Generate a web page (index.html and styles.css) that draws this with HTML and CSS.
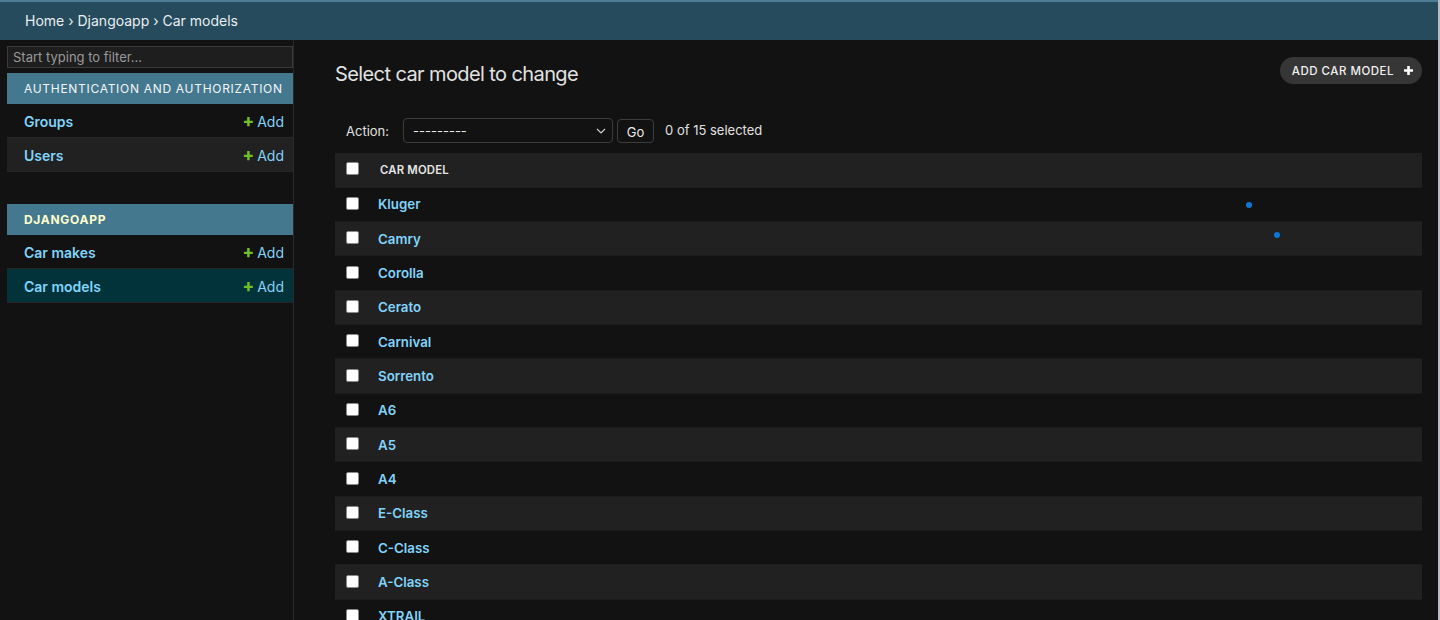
FILE: index.html
```html
<!DOCTYPE html>
<html lang="en">
<head>
<meta charset="utf-8">
<title>Select car model to change</title>
<link rel="stylesheet" href="styles.css">
</head>
<body>
<div class="page">
  <div class="breadcrumbs">
    <a href="#">Home</a> › <a href="#">Djangoapp</a> › Car models
  </div>
  <div class="main">
    <nav class="sidebar">
      <input class="nav-filter" type="text" placeholder="Start typing to filter...">
      <div class="module">
        <div class="caption">Authentication and Authorization</div>
        <div class="nav-row"><a href="#" class="nav-link">Groups</a><a href="#" class="addlink"><span class="plus">+</span>Add</a></div>
        <div class="nav-row alt"><a href="#" class="nav-link">Users</a><a href="#" class="addlink"><span class="plus">+</span>Add</a></div>
      </div>
      <div class="module">
        <div class="caption current">Djangoapp</div>
        <div class="nav-row"><a href="#" class="nav-link">Car makes</a><a href="#" class="addlink"><span class="plus">+</span>Add</a></div>
        <div class="nav-row selected"><a href="#" class="nav-link">Car models</a><a href="#" class="addlink"><span class="plus">+</span>Add</a></div>
      </div>
    </nav>
    <div class="content">
      <div class="title-row">
        <h1>Select car model to change</h1>
        <a href="#" class="add-btn">Add car model
          <svg width="11" height="11" viewBox="0 0 11 11"><path d="M5.5 1v9M1 5.5h9" stroke="#fff" stroke-width="2.6"/></svg>
        </a>
      </div>
      <div class="actions">
        <label>Action:</label>
        <div class="select">
          <span>---------</span>
          <svg width="10" height="6" viewBox="0 0 10 6"><path d="M1 1l4 4 4-4" fill="none" stroke="#ccc" stroke-width="1.2"/></svg>
        </div>
        <button class="go">Go</button>
        <span class="counter">0 of 15 selected</span>
      </div>
      <table class="results">
        <thead>
          <tr><th class="cb"><span class="box"></span></th><th>Car model</th></tr>
        </thead>
        <tbody>
          <tr><td class="cb"><span class="box"></span></td><td><a href="#">Kluger</a></td></tr>
          <tr><td class="cb"><span class="box"></span></td><td><a href="#">Camry</a></td></tr>
          <tr><td class="cb"><span class="box"></span></td><td><a href="#">Corolla</a></td></tr>
          <tr><td class="cb"><span class="box"></span></td><td><a href="#">Cerato</a></td></tr>
          <tr><td class="cb"><span class="box"></span></td><td><a href="#">Carnival</a></td></tr>
          <tr><td class="cb"><span class="box"></span></td><td><a href="#">Sorrento</a></td></tr>
          <tr><td class="cb"><span class="box"></span></td><td><a href="#">A6</a></td></tr>
          <tr><td class="cb"><span class="box"></span></td><td><a href="#">A5</a></td></tr>
          <tr><td class="cb"><span class="box"></span></td><td><a href="#">A4</a></td></tr>
          <tr><td class="cb"><span class="box"></span></td><td><a href="#">E-Class</a></td></tr>
          <tr><td class="cb"><span class="box"></span></td><td><a href="#">C-Class</a></td></tr>
          <tr><td class="cb"><span class="box"></span></td><td><a href="#">A-Class</a></td></tr>
          <tr><td class="cb"><span class="box"></span></td><td><a href="#">XTRAIL</a></td></tr>
        </tbody>
      </table>
      <span class="dot dot1"></span>
      <span class="dot dot2"></span>
    </div>
  </div>
</div>
</body>
</html>
```

FILE: styles.css
```css
html, body {
  margin: 0;
  padding: 0;
  background: #121212;
  height: 620px;
  overflow: hidden;
}
body {
  font-family: Inter, "Liberation Sans", sans-serif;
  color: #e0e0e0;
  font-size: 14px;
}
a { text-decoration: none; }

.page {
  border-right: 2px solid #b9bcc4;
  min-height: 620px;
}

.breadcrumbs {
  background: #264b5d;
  border-top: 2px solid #4e7d95;
  height: 38px;
  line-height: 38px;
  padding-left: 25px;
  color: #e8eef1;
  font-size: 14px;
}
.breadcrumbs a { color: #e8eef1; }

.main {
  display: flex;
  align-items: flex-start;
}

.sidebar {
  width: 286px;
  padding: 6px 0 0 7px;
  border-right: 1px solid #2a2a2a;
  min-height: 580px;
  flex: none;
}
.nav-filter {
  display: block;
  box-sizing: border-box;
  width: 286px;
  height: 22px;
  margin: 0 0 5px 0;
  padding: 0 5px;
  background: #1e1e1e;
  border: 1px solid #3a3a3a;
  color: #ddd;
  font-family: inherit;
  font-size: 13px;
  outline: none;
}
.nav-filter::placeholder { color: #9a9a9a; }

.module { margin-bottom: 32px; }
.caption {
  background: #44788f;
  height: 31px;
  line-height: 31px;
  padding-left: 17px;
  font-size: 12px;
  letter-spacing: 0.7px;
  text-transform: uppercase;
  color: #f2f6f8;
}
.caption.current {
  color: #ffffcc;
  font-weight: 700;
}
.nav-row {
  display: flex;
  justify-content: space-between;
  align-items: center;
  height: 33px;
  border-bottom: 1px solid #262626;
  padding: 1px 9px 0 17px;
  box-sizing: border-box;
  height: 34px;
  font-size: 14px;
}
.nav-row.alt { background: #212121; }
.nav-row.selected { background: #03333a; }
.nav-link {
  color: #81d4fa;
  font-weight: 600;
}
.addlink {
  color: #81d4fa;
  font-size: 14px;
}
.plus {
  color: #70bf2b;
  font-weight: 800;
  font-size: 17px;
  margin-right: 3px;
}

.content {
  position: relative;
  flex: 1;
  padding: 22px 16px 0 41px;
}
.title-row {
  display: flex;
  justify-content: space-between;
  align-items: flex-start;
}
h1 {
  margin: 0;
  font-size: 20px;
  line-height: 24px;
  font-weight: 400;
  letter-spacing: -0.6px;
  color: #e2e2e2;
}
.add-btn {
  display: flex;
  align-items: center;
  gap: 9px;
  margin-top: -5px;
  height: 27px;
  padding: 0 8px 0 12px;
  border-radius: 14px;
  background: #363636;
  color: #f0f0f0;
  font-size: 11.5px;
  font-weight: 500;
  letter-spacing: 0.5px;
  text-transform: uppercase;
}

.actions {
  display: flex;
  align-items: center;
  margin-top: 32px;
  padding-left: 11px;
  height: 25px;
  font-size: 13px;
  color: #e0e0e0;
}
.actions label { margin-right: 14px; }
.select {
  box-sizing: border-box;
  width: 210px;
  height: 25px;
  border: 1px solid #3d3d3d;
  border-radius: 4px;
  display: flex;
  align-items: center;
  justify-content: space-between;
  padding: 0 6px 0 9px;
  font-size: 13px;
  color: #e8e8e8;
}
.go {
  box-sizing: border-box;
  height: 24px;
  width: 37px;
  margin-left: 4px;
  background: #121212;
  border: 1px solid #3d3d3d;
  border-radius: 4px;
  color: #e8e8e8;
  font-family: inherit;
  font-size: 13px;
  padding: 0;
  padding-top: 2px;
}
.counter {
  margin-left: 11px;
  margin-top: -2px;
}

.results {
  width: 100%;
  border-collapse: collapse;
  margin-top: 10px;
}
.results th, .results td {
  padding: 0 8px;
  height: 34.33px;
  box-sizing: border-box;
  text-align: left;
  border-bottom: 1px solid #1c1c1c;
  vertical-align: middle;
}
.results thead tr { background: #212121; }
.results th {
  font-size: 11.3px;
  font-weight: 600;
  text-transform: uppercase;
  color: #e6e6e6;
  letter-spacing: 0.2px;
  padding-left: 10px;
}
.results tbody tr:nth-child(even) { background: #212121; }
.results td {
  font-size: 13.3px;
  font-weight: 600;
}
.results td a { color: #81d4fa; }
.results .cb {
  width: 22px;
  padding: 0 11px 0 11px;
}
.box {
  display: block;
  box-sizing: border-box;
  width: 13px;
  height: 13px;
  background: #fff;
  border: 1px solid #8a8a8a;
  border-radius: 2px;
  margin-top: -2px;
}

.dot {
  position: absolute;
  width: 6px;
  height: 6px;
  border-radius: 50%;
  background: #0a78d6;
}
.dot1 { left: 952px; top: 162px; }
.dot2 { left: 980px; top: 192px; }
```
